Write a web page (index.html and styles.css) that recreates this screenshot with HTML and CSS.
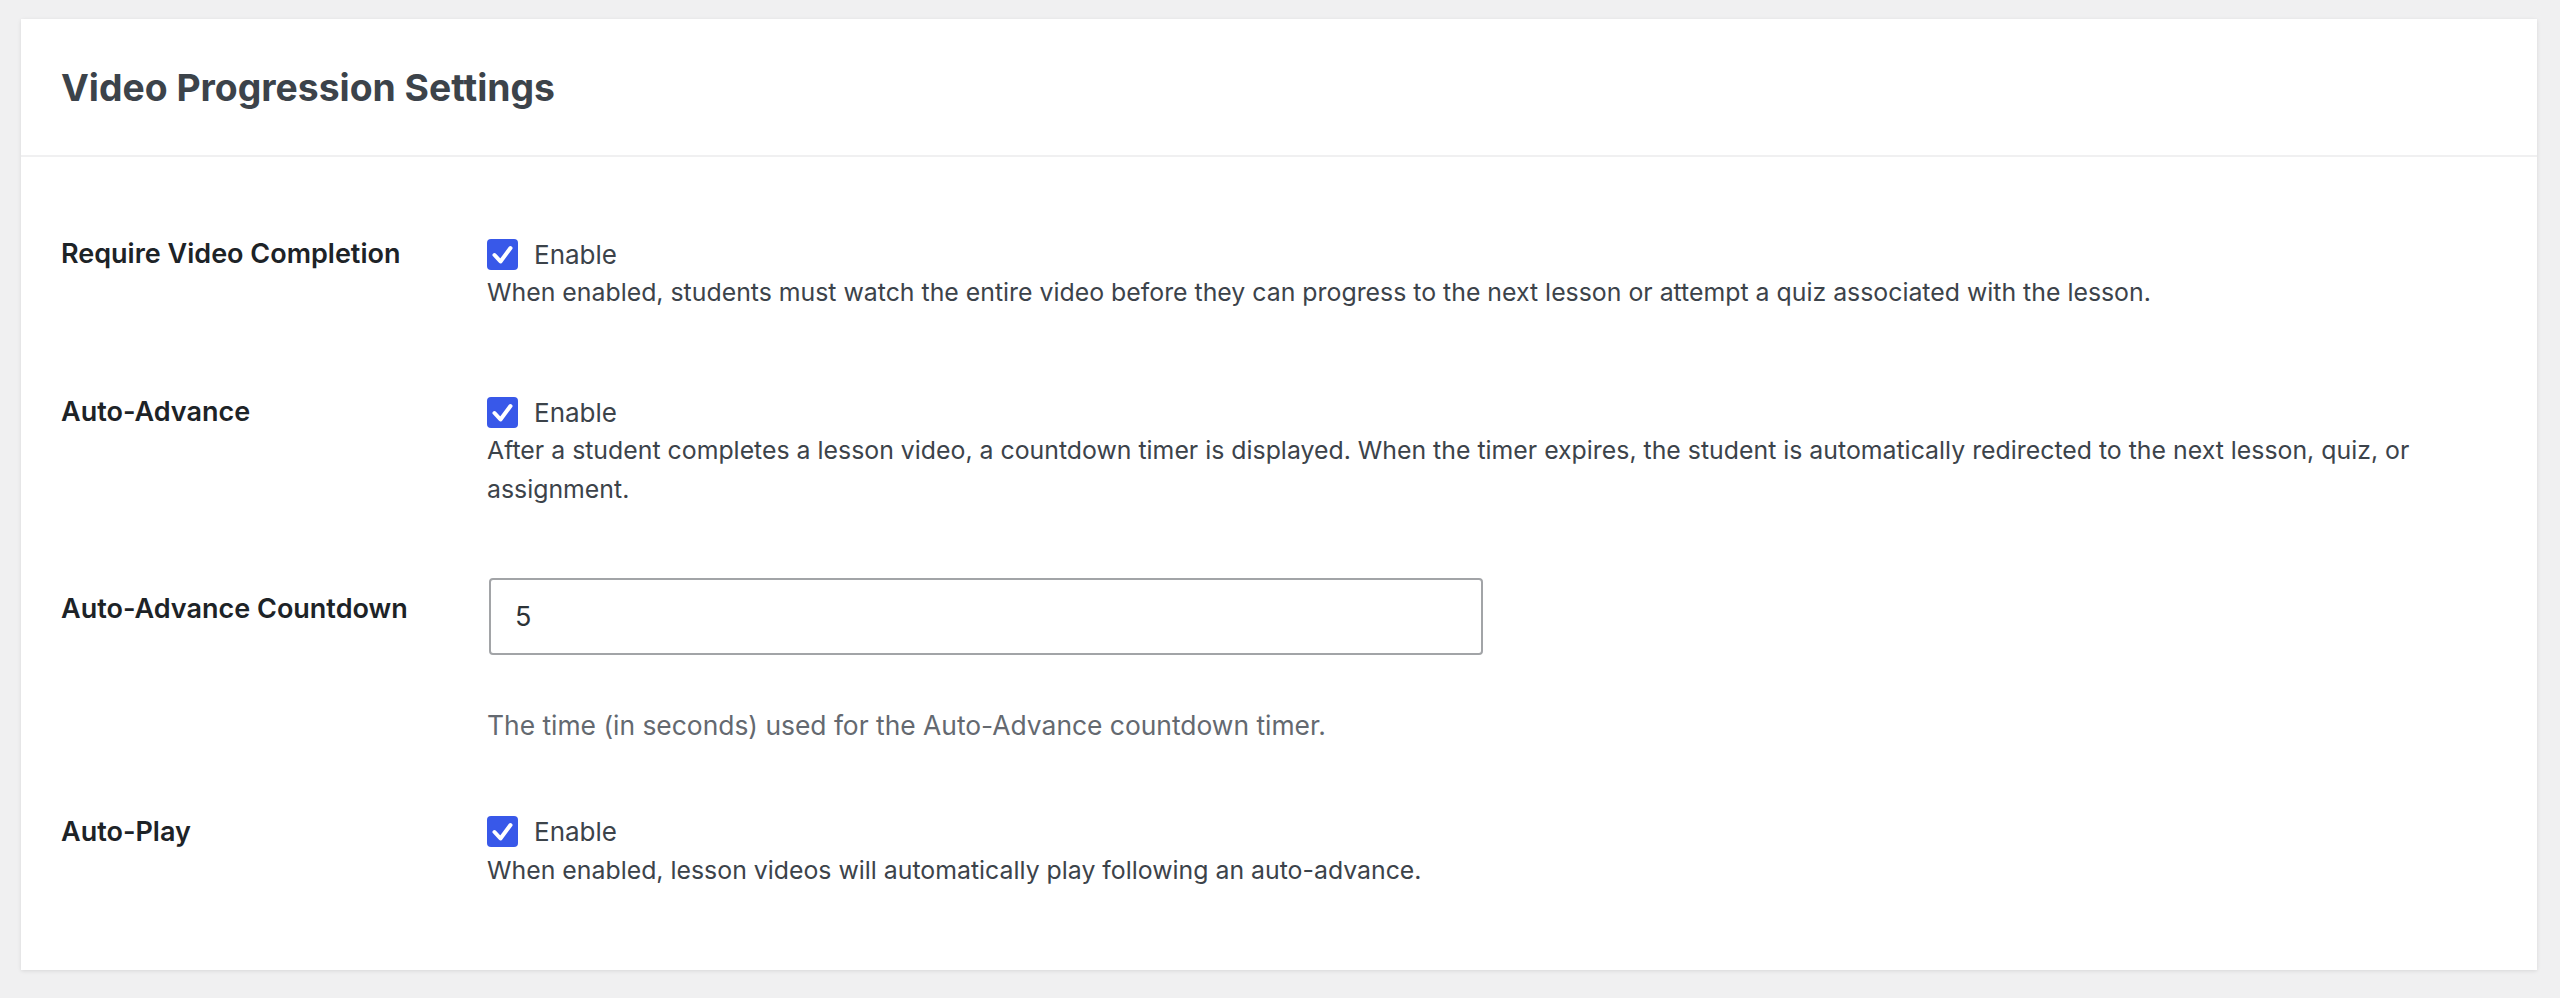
FILE: index.html
```html
<!DOCTYPE html>
<html>
<head>
	<meta charset="utf-8">
	<title>Video Progression Settings</title>
	<link rel="stylesheet" href="styles.css">
</head>
<body>
	<div class="panel">
		<div class="panel-header">
			<h2>Video Progression Settings</h2>
		</div>

		<div class="panel-body">
			<!-- Require Video Completion -->
			<div class="setting-row">
				<div class="setting-label">Require Video Completion</div>
				<div class="setting-field">
					<label class="check">
						<span class="check-box">
							<svg viewBox="0 0 31 31" width="31" height="31"><polyline points="7.5,16 13.5,22.5 23.5,9" fill="none" stroke="#fff" stroke-width="4" stroke-linecap="round" stroke-linejoin="round"/></svg>
						</span>
						Enable
					</label>
					<p class="description">When enabled, students must watch the entire video before they can progress to the next lesson or attempt a quiz associated with the lesson.</p>
				</div>
			</div>

			<!-- Auto-Advance -->
			<div class="setting-row">
				<div class="setting-label">Auto-Advance</div>
				<div class="setting-field">
					<label class="check">
						<span class="check-box">
							<svg viewBox="0 0 31 31" width="31" height="31"><polyline points="7.5,16 13.5,22.5 23.5,9" fill="none" stroke="#fff" stroke-width="4" stroke-linecap="round" stroke-linejoin="round"/></svg>
						</span>
						Enable
					</label>
					<p class="description">After a student completes a lesson video, a countdown timer is displayed. When the timer expires, the student is automatically redirected to the next lesson, quiz, or assignment.</p>
				</div>
			</div>

			<!-- Auto-Advance Countdown -->
			<div class="setting-row">
				<div class="setting-label">Auto-Advance Countdown</div>
				<div class="setting-field field-input">
					<input type="text" class="text-input" value="5">
					<p class="description muted">The time (in seconds) used for the Auto-Advance countdown timer.</p>
				</div>
			</div>

			<!-- Auto-Play -->
			<div class="setting-row">
				<div class="setting-label">Auto-Play</div>
				<div class="setting-field">
					<label class="check">
						<span class="check-box">
							<svg viewBox="0 0 31 31" width="31" height="31"><polyline points="7.5,16 13.5,22.5 23.5,9" fill="none" stroke="#fff" stroke-width="4" stroke-linecap="round" stroke-linejoin="round"/></svg>
						</span>
						Enable
					</label>
					<p class="description">When enabled, lesson videos will automatically play following an auto-advance.</p>
				</div>
			</div>
		</div>
	</div>
</body>
</html>
```

FILE: styles.css
```css
body {
	margin: 0;
	padding: 19px 23px 27px 21px;
	background: #f0f0f1;
	font-family: Inter, "Noto Sans", sans-serif;
	color: #3c434a;
}

.panel {
	background: #fff;
	box-shadow: 0 1px 4px rgba(0, 0, 0, 0.1);
}

.panel-header {
	height: 136px;
	display: flex;
	align-items: center;
	padding: 0 40px;
	border-bottom: 2px solid #f0f0f1;
}

.panel-header h2 {
	margin: 0;
	font-size: 37.3px;
	font-weight: 700;
	color: #3c434a;
}

.panel-body {
	padding: 37px 40px 40px;
}

.setting-row {
	display: grid;
	grid-template-columns: 426px 1fr;
}

.setting-label {
	padding: 41px 0;
	font-size: 27px;
	font-weight: 600;
	line-height: 38px;
	color: #1d2327;
}

.setting-field {
	padding: 41px 0;
}

.field-input {
	padding: 29px 0 27px;
}

.check {
	display: flex;
	align-items: center;
	gap: 16px;
	height: 38px;
	font-size: 26px;
	color: #3c434a;
}

.check-box {
	width: 31px;
	height: 31px;
	border-radius: 4px;
	background: #3858e9;
	display: flex;
}

.description {
	margin: 0;
	font-size: 24.85px;
	line-height: 38.4px;
	color: #3c434a;
}

.description.muted {
	margin-top: 51px;
	font-size: 26.4px;
	color: #646970;
}

.text-input {
	display: block;
	box-sizing: border-box;
	width: 994px;
	height: 77px;
	margin: 0 0 0 2px;
	padding: 0 24px;
	border: 2px solid #a2a4a7;
	border-radius: 4px;
	font-family: Inter, "Noto Sans", sans-serif;
	font-size: 27px;
	color: #2c3338;
	background: #fff;
}
```
